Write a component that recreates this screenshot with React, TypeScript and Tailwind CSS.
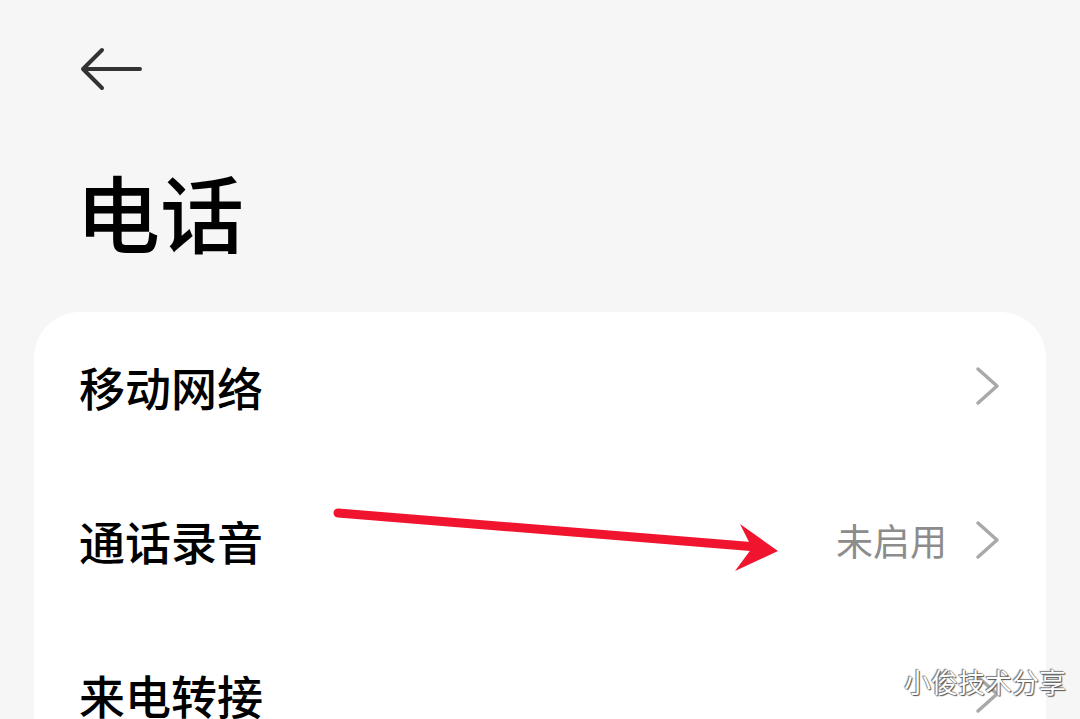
const rows = [
  { label: '移动网络', value: '' },
  { label: '通话录音', value: '未启用' },
  { label: '来电转接', value: '' },
];

function BackArrow() {
  return (
    <svg width="64" height="44" viewBox="0 0 64 44" fill="none" stroke="#333333" strokeWidth={4} strokeLinecap="round" strokeLinejoin="round">
      <path d="M3 22h57M22 3L3 22l19 19" />
    </svg>
  );
}

function Chevron() {
  return (
    <svg width="26" height="40" viewBox="0 0 26 40" fill="none" stroke="#a9a9a9" strokeWidth={3.5} strokeLinecap="round" strokeLinejoin="round">
      <path d="M3 3l19 17L3 37" />
    </svg>
  );
}

export default function App() {
  return (
    <div className="relative h-[719px] w-[1080px] overflow-hidden bg-[#f6f6f6] font-['Noto_Sans_CJK_SC',sans-serif]">
      <div className="pl-[80px] pt-[47px]">
        <BackArrow />
      </div>
      <h1 className="mt-[78px] pl-[76px] text-[84px] font-medium leading-none text-black">电话</h1>

      <div className="mx-[34px] mt-[59px] rounded-[46px] bg-white">
        {rows.map((row) => (
          <div key={row.label} className="flex h-[154px] items-center justify-between pb-[6px] pl-[45px] pr-[45px]">
            <span className="text-[46px] font-medium leading-none text-black">{row.label}</span>
            <div className="flex items-center gap-[28px]">
              {row.value && <span className="text-[37px] leading-none text-[#8c8c8c]">{row.value}</span>}
              <Chevron />
            </div>
          </div>
        ))}
      </div>

      {/* red annotation arrow */}
      <svg className="absolute left-0 top-0" width="1080" height="719" viewBox="0 0 1080 719">
        <path d="M338 513 L757 547" stroke="#f0142e" strokeWidth={9} strokeLinecap="round" />
        <polygon points="740,524 778,551 735,571 752,548" fill="#f0142e" />
      </svg>

      <div className="absolute right-[14px] top-[668px] text-[27px] leading-none text-white [text-shadow:0_0_1px_#444,1px_1px_1px_#555,-1px_-1px_1px_#888]">
        小俊技术分享
      </div>
    </div>
  );
}
